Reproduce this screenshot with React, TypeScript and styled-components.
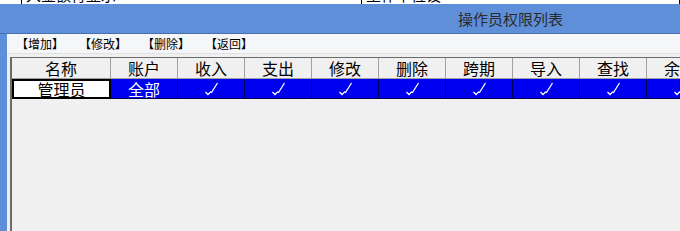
import styled, { createGlobalStyle } from 'styled-components';

const GlobalStyle = createGlobalStyle`
  html, body {
    margin: 0;
    padding: 0;
    background: #f0f0f0;
  }
  body {
    font-family: "Noto Sans CJK SC", "Noto Sans", sans-serif;
    width: 680px;
    height: 231px;
    overflow: hidden;
  }
`;

const columns = ['名称', '账户', '收入', '支出', '修改', '删除', '跨期', '导入', '查找', '余额'];

function Tick() {
  return (
    <svg width="15" height="15" viewBox="0 0 15 15">
      <polyline
        points="1.5,11 4,13.5 6.5,11 7.5,11.5 13.5,2"
        fill="none"
        stroke="#fff"
        strokeWidth="1.3"
      />
    </svg>
  );
}

export default function App() {
  return (
    <>
      <GlobalStyle />
      <TopStrip>
        <StripCell $width={22} />
        <StripCell $width={340}>
          <StripText>入金额符显示</StripText>
        </StripCell>
        <StripCell $width={318}>
          <StripText>工作单位设</StripText>
        </StripCell>
      </TopStrip>
      <Window>
        <TitleBar>
          <Title>操作员权限列表</Title>
        </TitleBar>
        <Body>
          <Toolbar>
            <ToolButton>【增加】</ToolButton>
            <ToolButton>【修改】</ToolButton>
            <ToolButton>【删除】</ToolButton>
            <ToolButton>【返回】</ToolButton>
          </Toolbar>
          <Separator />
          <Grid>
            <Row $height={21}>
              {columns.map((c, i) => (
                <HeadCell key={c} $first={i === 0}>{c}</HeadCell>
              ))}
            </Row>
            <Row $height={20}>
              <NameCell>管理员</NameCell>
              <DataCell>全部</DataCell>
              {columns.slice(2).map((c) => (
                <DataCell key={c}>
                  <Tick />
                </DataCell>
              ))}
            </Row>
          </Grid>
        </Body>
      </Window>
    </>
  );
}

const TopStrip = styled.div`
  display: flex;
  height: 4px;
  background: #fff;
  overflow: hidden;
`;

const StripCell = styled.div<{ $width: number }>`
  width: ${(p) => p.$width}px;
  height: 4px;
  flex: none;
  border-right: 1px solid #000;
  overflow: hidden;
  box-sizing: border-box;
`;

const StripText = styled.div`
  margin-top: -13px;
  padding-left: 4px;
  font-size: 15px;
  line-height: 16px;
  color: #000;
  white-space: nowrap;
`;

const Window = styled.div`
  display: flex;
  flex-direction: column;
  height: 227px;
  background: #5f8fd8;
`;

const TitleBar = styled.div`
  display: flex;
  align-items: center;
  height: 29px;
  padding-left: 458px;
  border-bottom: 1px solid #4a6fae;
`;

const Title = styled.div`
  font-size: 15px;
  color: #2b2b2b;
  white-space: nowrap;
`;

const Body = styled.div`
  flex: 1;
  margin-left: 7px;
  background: #f0f0f0;
  display: flex;
  flex-direction: column;
`;

const Toolbar = styled.div`
  display: flex;
  align-items: center;
  height: 19px;
  padding-left: 9px;
  gap: 25px;
  background: #f5f6f8;
`;

const ToolButton = styled.span`
  font-size: 12px;
  color: #000;
  white-space: nowrap;
  width: 38px;
`;

const Separator = styled.div`
  height: 3px;
  border-top: 1px solid #e2e2e2;
  background: #f0f0f0;
`;

const Grid = styled.div`
  flex: 1;
  margin-left: 3px;
  border-left: 2px solid #6b6b6b;
  border-top: 1px solid #6b6b6b;
  display: flex;
  flex-direction: column;
  overflow: hidden;
`;

const Row = styled.div<{ $height: number }>`
  display: flex;
  flex: none;
  height: ${(p) => p.$height}px;
`;

const HeadCell = styled.div<{ $first?: boolean }>`
  flex: none;
  width: ${(p) => (p.$first ? 99 : 67)}px;
  box-sizing: border-box;
  display: flex;
  align-items: center;
  justify-content: center;
  background: #f0f0f0;
  border-right: 1px solid #a0a0a0;
  border-bottom: 1px solid #a0a0a0;
  font-size: 16px;
  line-height: 16px;
  color: #000;
`;

const NameCell = styled.div`
  flex: none;
  width: 99px;
  box-sizing: border-box;
  display: flex;
  align-items: center;
  justify-content: center;
  background: #fff;
  border: 2px solid #000;
  font-size: 16px;
  line-height: 16px;
  color: #000;
`;

const DataCell = styled.div`
  flex: none;
  width: 67px;
  box-sizing: border-box;
  display: flex;
  align-items: center;
  justify-content: center;
  background: #0000f0;
  border-right: 1px solid #000050;
  border-bottom: 1px solid #000050;
  font-size: 16px;
  line-height: 16px;
  color: #fff;
`;
